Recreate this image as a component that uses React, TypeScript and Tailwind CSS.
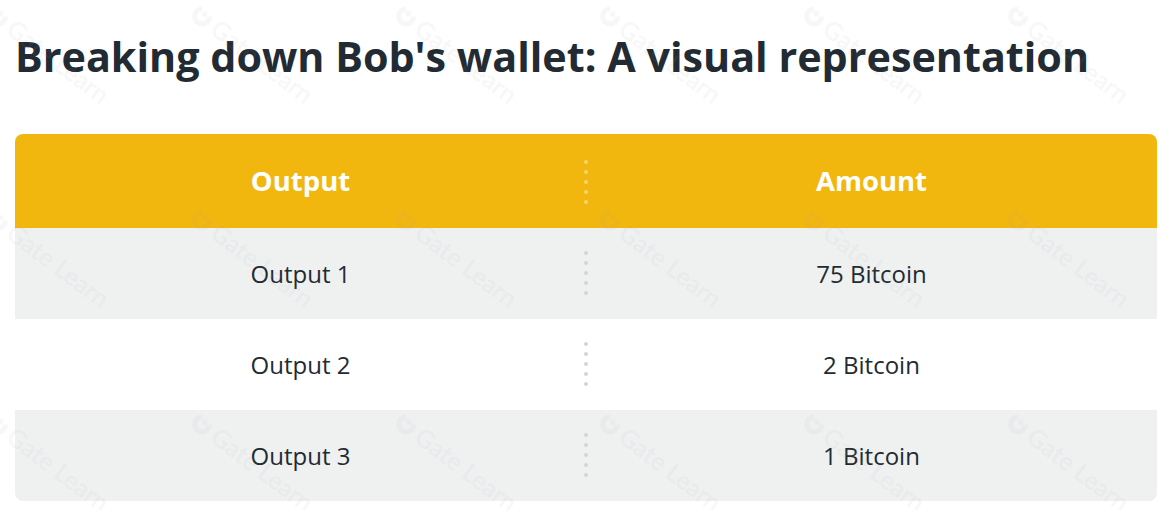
import React from "react";

const rows = [
  { o: "Output 1", a: "75 Bitcoin", bg: "bg-[#eff1f1]" },
  { o: "Output 2", a: "2 Bitcoin", bg: "bg-white" },
  { o: "Output 3", a: "1 Bitcoin", bg: "bg-[#eff1f1]" },
];

function Dots({ header }: { header?: boolean }) {
  return (
    <div className="flex flex-col gap-[6px]">
      {[0, 1, 2, 3, 4].map((i) => (
        <span
          key={i}
          className={
            "block w-[4px] h-[4px] rounded-full " +
            (header ? "bg-[#f7d46c]" : "bg-[#d3d6d7]")
          }
        />
      ))}
    </div>
  );
}

function Watermarks() {
  const xs = [-8, 196, 400, 604, 808, 1012];
  const ys = [-6, 198, 402];
  const items: { x: number; y: number }[] = [];
  ys.forEach((y) => xs.forEach((x) => items.push({ x, y })));
  return (
    <div className="pointer-events-none absolute inset-0 overflow-hidden">
      {items.map((p, i) => (
        <div
          key={i}
          className="absolute flex items-center gap-[3px] origin-top-left rotate-[37deg] text-[25px] font-semibold text-[#9aa0a6] opacity-[0.07]"
          style={{ left: p.x + 8, top: p.y }}
        >
          <svg width="24" height="24" viewBox="0 0 24 24" className="-rotate-[37deg]">
            <path d="M12 2a10 10 0 1 0 10 10h-5a5 5 0 1 1-5-5z" fill="#9aa0a6" />
            <rect x="12" y="7" width="5" height="5" fill="#9aa0a6" />
          </svg>
          <span style={{ fontFamily: "Lato, 'Open Sans', sans-serif" }}>Gate Learn</span>
        </div>
      ))}
    </div>
  );
}

export default function App() {
  return (
    <div
      className="relative w-[1174px] h-[510px] bg-white overflow-hidden"
      style={{ fontFamily: "'Open Sans', 'Noto Sans', sans-serif" }}
    >
      <div className="pl-[15px] pr-[17px] pt-[27px]">
        <h1 className="text-[41.3px] leading-[58px] font-bold text-[#222b33]">
          Breaking down Bob's wallet: A visual representation
        </h1>
        <div className="mt-[49px] rounded-[8px] overflow-hidden">
          <div className="grid grid-cols-2 h-[94px] bg-[#f2b70e] text-white text-[27.5px] font-bold">
            <div className="flex items-center justify-center">Output</div>
            <div className="relative flex items-center justify-center">
              <div className="absolute left-[-2px] top-[26px]">
                <Dots header />
              </div>
              Amount
            </div>
          </div>
          {rows.map((r) => (
            <div
              key={r.o}
              className={"grid grid-cols-2 h-[91px] text-[24px] text-[#222b33] " + r.bg}
            >
              <div className="flex items-center justify-center">{r.o}</div>
              <div className="relative flex items-center justify-center">
                <div className="absolute left-[-2px] top-[23px]">
                  <Dots />
                </div>
                {r.a}
              </div>
            </div>
          ))}
        </div>
      </div>
      <Watermarks />
    </div>
  );
}
